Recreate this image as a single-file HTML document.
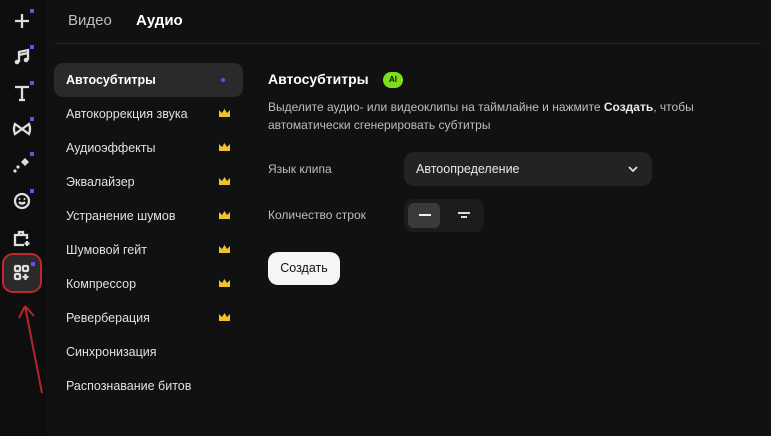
<!DOCTYPE html><html><head><meta charset="utf-8"><style>
body{margin:0;width:771px;height:436px;background:#111111;font-family:"Liberation Sans",sans-serif;color:#e8e8e8;position:relative;overflow:hidden}
.side{position:absolute;left:0;top:0;width:46px;height:436px;background:#0e0e0e}
.ic{position:absolute;left:10px;width:24px;height:24px}
.dot{position:absolute;width:4px;height:4px;background:#6a4cf0}
.tab{position:absolute;top:12px;font-size:15px}
.line{position:absolute;left:55px;right:10px;top:43px;height:1px;background:#2a2a2a}
.menu div{position:absolute;left:54px;width:189px;height:34px;line-height:34px;padding-left:12px;box-sizing:border-box;font-size:12.5px;color:#e0e0e0;border-radius:9px}
.menu .a{background:#2a2a2a;font-weight:bold;color:#fff}
.cr{position:absolute;right:13px;top:12px;width:11px;height:8px}
h1{position:absolute;left:268px;top:71px;margin:0;font-size:14px;font-weight:bold;color:#fff}
.ai{position:absolute;left:383px;top:72px;width:20px;height:16px;border-radius:8px;background:#7be01a;color:#111;font-size:8px;font-weight:bold;text-align:center;line-height:16px}
.desc{position:absolute;left:268px;top:98px;font-size:12px;line-height:18px;color:#bdbdbd}
.lbl{position:absolute;left:268px;font-size:12px;color:#bdbdbd}
.sel{position:absolute;left:404px;top:152px;width:248px;height:34px;border-radius:10px;background:#232323;font-size:12.5px;line-height:34px;padding-left:12px;box-sizing:border-box;color:#e8e8e8}
.seg{position:absolute;left:404px;top:199px;width:80px;height:33px;border-radius:9px;background:#1c1c1c}
.seg .on{position:absolute;left:4px;top:4px;width:32px;height:25px;border-radius:6px;background:#3a3a3a}
.btn{position:absolute;left:268px;top:252px;width:72px;height:33px;border-radius:10px;background:#f5f5f5;color:#111;font-size:12.5px;text-align:center;line-height:33px}
svg.ic path,svg.ic rect,svg.ic circle{stroke-width:2.3}
</style></head><body>
<div class="side">
<svg class="ic" style="top:9px" viewBox="0 0 24 24"><path d="M12 5v14M5 12h14" stroke="#ddd" fill="none"/></svg><div class="dot" style="left:30px;top:9px"></div>
<svg class="ic" style="top:45px" viewBox="0 0 24 24"><path d="M9 17V7l9-2v10M9 10l9-2" stroke="#ddd" fill="none"/><circle cx="7" cy="17" r="2.3" fill="#ddd"/><circle cx="16" cy="15" r="2.3" fill="#ddd"/></svg><div class="dot" style="left:30px;top:45px"></div>
<svg class="ic" style="top:81px" viewBox="0 0 24 24"><path d="M5 6h14M12 6v13M9 19h6" stroke="#ddd" fill="none"/></svg><div class="dot" style="left:30px;top:81px"></div>
<svg class="ic" style="top:117px" viewBox="0 0 24 24"><path d="M5 7q-2 5 0 10l14-10q2 5 0 10z" stroke="#ddd" fill="none"/></svg><div class="dot" style="left:30px;top:117px"></div>
<svg class="ic" style="top:153px" viewBox="0 0 24 24"><path d="M15 5l4 4-4 4-4-4z" fill="#ddd"/><circle cx="8" cy="14" r="1.6" fill="#ddd" stroke="none"/><circle cx="5" cy="18" r="1.6" fill="#ddd" stroke="none"/></svg><div class="dot" style="left:30px;top:152px"></div>
<svg class="ic" style="top:189px" viewBox="0 0 24 24"><circle cx="12" cy="12" r="7" stroke="#ddd" fill="none"/><path d="M9 13q3 3 6 0" stroke="#ddd" fill="none"/><circle cx="9.5" cy="10" r="1" fill="#ddd" stroke="none"/><circle cx="14.5" cy="10" r="1" fill="#ddd" stroke="none"/></svg><div class="dot" style="left:30px;top:189px"></div>
<svg class="ic" style="top:226px" viewBox="0 0 24 24"><path d="M14 19H5V9h12v4M9 9V6h4v3M17 15v5M14.5 17.5h5" stroke="#ddd" fill="none"/></svg>
<div style="position:absolute;left:2px;top:253px;width:40px;height:40px;border:2px solid #c0282c;border-radius:11px;box-sizing:border-box;background:#2a2a2a"></div>
<svg class="ic" style="top:261px;left:10px" viewBox="0 0 24 24"><rect x="5" y="5" width="5" height="5" rx="1" stroke="#ddd" fill="none"/><rect x="13" y="5" width="5" height="5" rx="1" stroke="#ddd" fill="none"/><rect x="5" y="13" width="5" height="5" rx="1" stroke="#ddd" fill="none"/><path d="M15.5 13v6M12.5 16h6" stroke="#ddd"/></svg><div class="dot" style="left:31px;top:262px"></div>
</div>
<svg style="position:absolute;left:0;top:0" width="60" height="436"><path d="M42 393L25 306M25 306l-6 12M25 306l9 10" stroke="#b3262a" stroke-width="2" fill="none"/></svg>
<div class="tab" style="left:68px;color:#bdbdbd">Видео</div>
<div class="tab" style="left:136px;font-weight:bold;color:#fff">Аудио</div>
<div class="line"></div>
<div class="menu">
<div class="a" style="top:63px">Автосубтитры<span style="position:absolute;right:18px;top:15px;width:4px;height:4px;border-radius:2px;background:#6a4cf0"></span></div>
<div style="top:97px">Автокоррекция звука<svg class="cr" viewBox="0 0 11 8"><path d="M0 1l3 3 2.5-4 2.5 4 3-3v7H0z" fill="#f0c22e"/></svg></div>
<div style="top:131px">Аудиоэффекты<svg class="cr" viewBox="0 0 11 8"><path d="M0 1l3 3 2.5-4 2.5 4 3-3v7H0z" fill="#f0c22e"/></svg></div>
<div style="top:165px">Эквалайзер<svg class="cr" viewBox="0 0 11 8"><path d="M0 1l3 3 2.5-4 2.5 4 3-3v7H0z" fill="#f0c22e"/></svg></div>
<div style="top:199px">Устранение шумов<svg class="cr" viewBox="0 0 11 8"><path d="M0 1l3 3 2.5-4 2.5 4 3-3v7H0z" fill="#f0c22e"/></svg></div>
<div style="top:233px">Шумовой гейт<svg class="cr" viewBox="0 0 11 8"><path d="M0 1l3 3 2.5-4 2.5 4 3-3v7H0z" fill="#f0c22e"/></svg></div>
<div style="top:267px">Компрессор<svg class="cr" viewBox="0 0 11 8"><path d="M0 1l3 3 2.5-4 2.5 4 3-3v7H0z" fill="#f0c22e"/></svg></div>
<div style="top:301px">Реверберация<svg class="cr" viewBox="0 0 11 8"><path d="M0 1l3 3 2.5-4 2.5 4 3-3v7H0z" fill="#f0c22e"/></svg></div>
<div style="top:335px">Синхронизация</div>
<div style="top:369px">Распознавание битов</div>
</div>
<h1>Автосубтитры</h1><div class="ai">AI</div>
<div class="desc">Выделите аудио- или видеоклипы на таймлайне и нажмите <b style="color:#e8e8e8">Создать</b>, чтобы<br>автоматически сгенерировать субтитры</div>
<div class="lbl" style="top:162px">Язык клипа</div>
<div class="sel">Автоопределение<svg style="position:absolute;right:14px;top:13px" width="10" height="8" viewBox="0 0 10 8"><path d="M1 2l4 4 4-4" stroke="#ddd" stroke-width="1.8" fill="none"/></svg></div>
<div class="lbl" style="top:208px">Количество строк</div>
<div class="seg"><div class="on"></div><svg style="position:absolute;left:14px;top:10px" width="14" height="14"><path d="M1 6h12" stroke="#eee" stroke-width="2"/></svg><svg style="position:absolute;left:53px;top:10px" width="14" height="14"><path d="M1 4h12M4 8h6" stroke="#ddd" stroke-width="2"/></svg></div>
<div class="btn">Создать</div>
</body></html>
